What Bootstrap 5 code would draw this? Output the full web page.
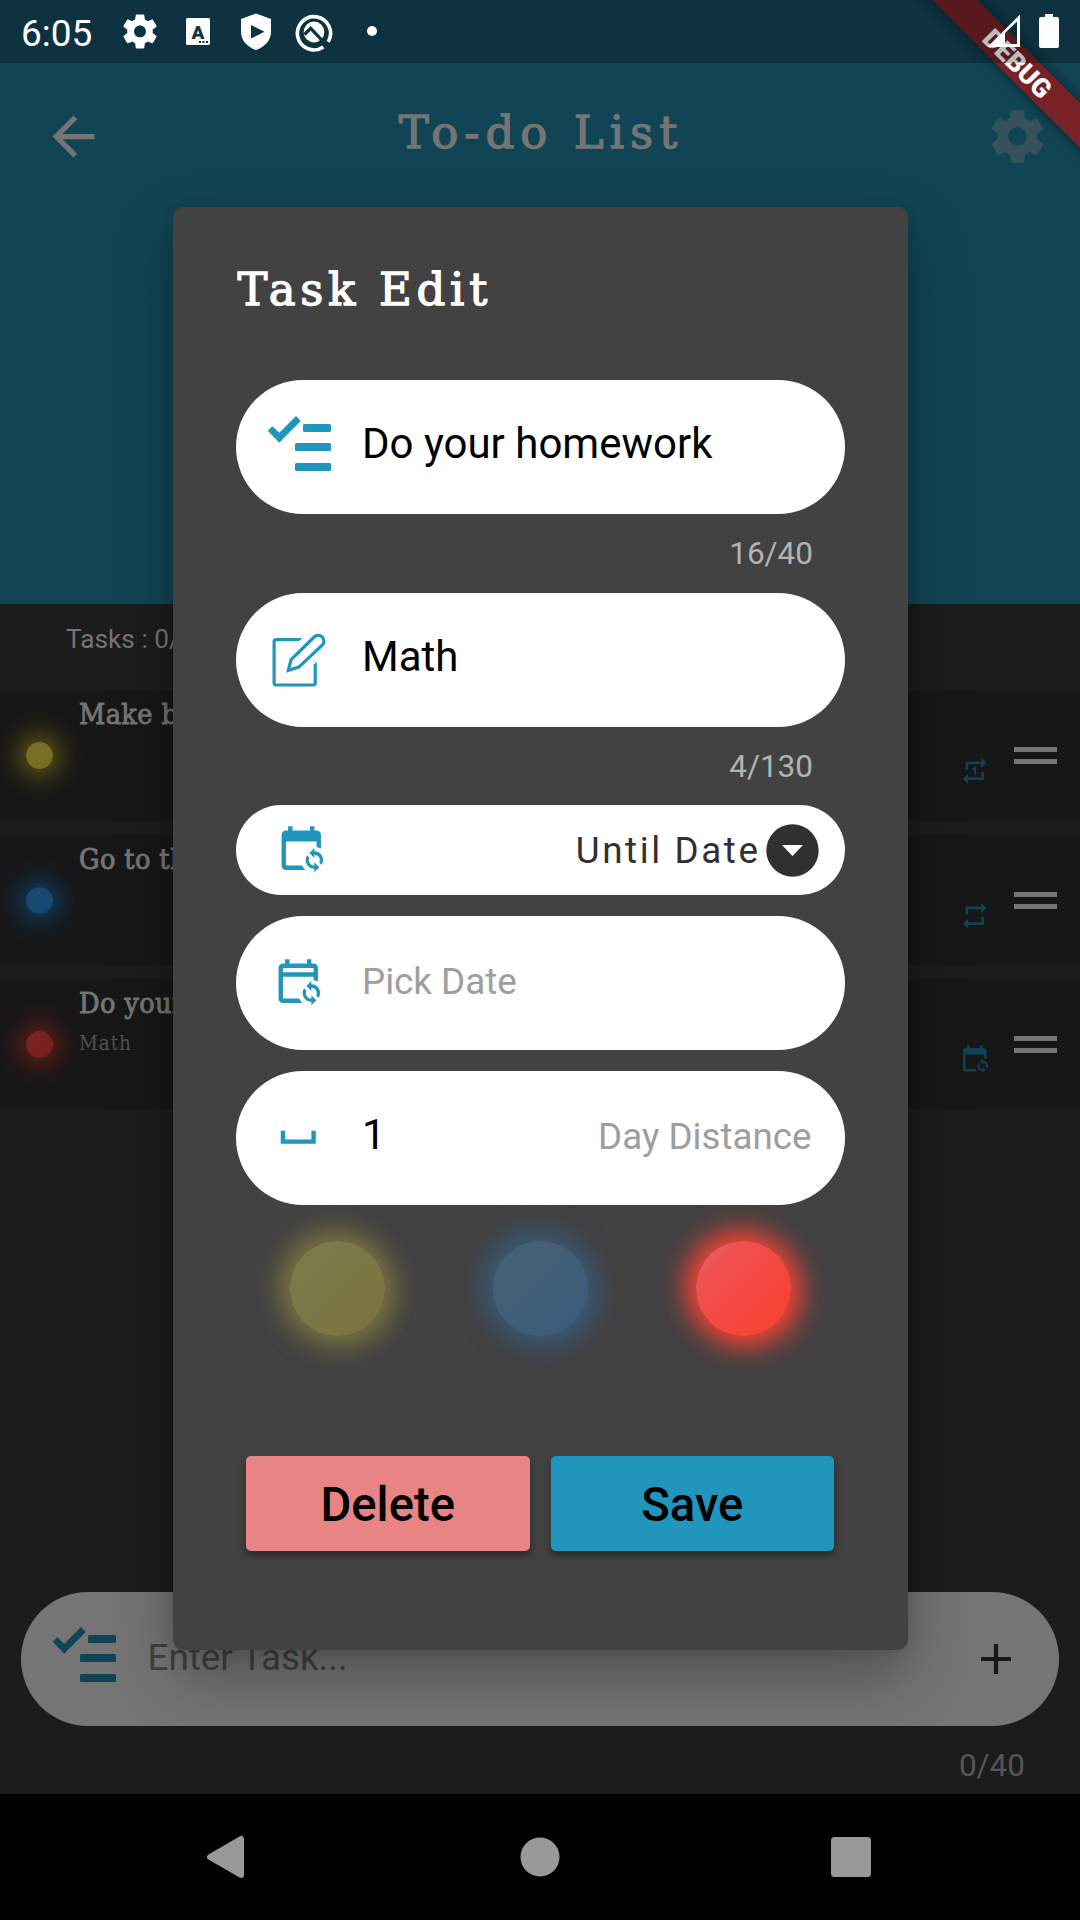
<!DOCTYPE html>
<html lang="en">
<head>
<meta charset="utf-8">
<meta name="viewport" content="width=device-width, initial-scale=1">
<title>To-do List</title>
<link href="https://cdn.jsdelivr.net/npm/bootstrap@5.3.0/dist/css/bootstrap.min.css" rel="stylesheet">
<style>
  :root { --accent: #2196bc; --accent-dim: #104454; --dim: #757575; }
  html, body { height: 1920px; }
  body { width: 1080px; background: #1c1c1c; font-family: Roboto, sans-serif; overflow: hidden; line-height: 1.2; }
  svg { display: block; flex: none; }
  .status { height: 63px; z-index: 30; background: rgba(0,0,0,.26); color: #fff; }
  .status .clock { font-size: 37px; width: 103px; padding: 5px 0 0 21px; }
  .hero { height: 603.5px; background: #114555; padding-top: 63px; }
  .topbar { height: 147px; padding: 0 31px 0 42px; }
  .typed { font-family: "DejaVu Serif", serif; font-size: 45px; line-height: 1; -webkit-text-stroke: 1.3px currentColor; }
  .topbar .typed { color: var(--dim); padding: 0 0 8px 0; letter-spacing: 6px; margin-right: 9px; }
  .summary { height: 86.5px; color: var(--dim); font-size: 26.25px; padding: 20px 0 0 66px; }
  .task { height: 131px; background: #171717; margin-bottom: 14px; padding-right: 23px; }
  .task.second { margin-bottom: 13px; }
  .led { width: 27px; height: 27px; margin: 0 26px 0 26px; }
  .led.y { background: linear-gradient(135deg, #77702c, #776d1c); box-shadow: 0 0 26px 6px #6f6612; }
  .led.b { background: linear-gradient(135deg, #20496c, #10477a); box-shadow: 0 0 26px 6px #0f4677; }
  .led.r { background: linear-gradient(135deg, #772627, #781f19); box-shadow: 0 0 26px 6px #741e18; }
  .ttl { font-family: "DejaVu Serif Condensed", "DejaVu Serif", serif; font-stretch: condensed; font-size: 28.5px; line-height: 49px; color: var(--dim); -webkit-text-stroke: .9px currentColor; letter-spacing: .4px; }
  .sub { font-family: "DejaVu Serif Condensed", "DejaVu Serif", serif; font-stretch: condensed; font-size: 20.5px; line-height: 30px; color: #525252; letter-spacing: .9px; }
  .handle { width: 43px; height: 17px; border: solid var(--dim); border-width: 5.7px 0; margin-left: 24px; }
  .rep { color: var(--accent-dim); margin-top: 31px; }
  .composer { height: 134px; margin: 0 21px; background: var(--dim); padding-left: 30.5px; }
  .composer .hint { font-size: 36.75px; color: #424242; margin-left: 30px; padding-bottom: 1px; }
  .composer-count { font-size: 31.5px; color: #555; padding: 20px 55px 0 0; height: 68px; line-height: 40px; }
  .sysnav { height: 126px; background: #000; padding: 0 208px 0 206px; }
  .scrim { top: 63px; height: 1731px; z-index: 10; }
  .sheet { width: 735px; height: 1443.5px; background: #424242; border-radius: 10.5px; padding: 0 63px; box-shadow: 0 26px 62px rgba(0,0,0,.32), 0 2px 14px rgba(0,0,0,.1); }
  .sheet .typed { height: 173.5px; color: #fff; padding: 60px 0 0 2px; letter-spacing: 4.7px; }
  .field { height: 133.8px; flex: none; background: #fff; color: var(--accent); padding: 0 33px 0 31.5px; }
  .field .val { font-size: 42px; color: #000; padding-bottom: 5px; }
  .field .ph { font-size: 36.75px; color: #9e9e9e; padding-bottom: 2px; }
  .ico { width: 95px; flex: none; }
  .count { height: 78.7px; flex: none; text-align: right; font-size: 31.5px; line-height: 80px; color: #b3b3b3; padding-right: 31.500px; }
  .dropdown-pill { height: 89.7px; margin-bottom: 21px; padding-right: 26px; }
  .dropdown-pill .val { font-size: 36.75px; letter-spacing: 2.6px; color: #303030; padding: 1px 0 0; margin-right: 5px; }
  .swatches { margin: 36.7px 54px 0 54.5px; }
  .swatch { width: 94.5px; height: 94.5px; }
  .swatch.y { background: linear-gradient(135deg, #7d7a4d, #7c7440); box-shadow: -5px -5px 30px 3px #7b7340, 5px 5px 30px 3px #7b7340; }
  .swatch.b { background: linear-gradient(135deg, #4a6175, #385c7b); box-shadow: -5px -5px 30px 3px #395a77, 5px 5px 30px 3px #395a77; }
  .swatch.r { background: linear-gradient(135deg, #ec6468, #f05050 25%, #f84235 85%); box-shadow: -5px -5px 30px 3px #f44336, 5px 5px 30px 3px #f44336; }
  .actions { margin-top: 120.5px; padding: 0 10.5px; gap: 21px; }
  .actions .btn { flex: 1; height: 94.5px; border: 0; border-radius: 5px; font-size: 47.25px; font-weight: 500; color: #000; line-height: 1; padding: 4px 0 0; box-shadow: 0 5px 6px rgba(0,0,0,.25), 0 3px 10px rgba(0,0,0,.15); }
  .del { background: #e88484; } .sav { background: #2196bc; }
  .ribbon { top: 0; right: 0; z-index: 20; }
</style>
</head>
<body class="position-relative">

<!-- System status bar -->
<div class="status position-absolute top-0 start-0 w-100 d-flex align-items-center">
  <span class="clock">6:05</span>
  <svg width="290" height="63" viewBox="103 0 290 63" fill="#fff">
    <path transform="translate(119.6 11) scale(1.7)" d="M19.43 12.98c.04-.32.07-.64.07-.98s-.03-.66-.07-.98l2.11-1.65c.19-.15.24-.42.12-.64l-2-3.46c-.12-.22-.39-.3-.61-.22l-2.49 1c-.52-.4-1.08-.73-1.69-.98l-.38-2.65C14.46 2.18 14.25 2 14 2h-4c-.25 0-.46.18-.49.42l-.38 2.65c-.61.25-1.17.59-1.69.98l-2.49-1c-.23-.09-.49 0-.61.22l-2 3.46c-.13.22-.07.49.12.64l2.11 1.65c-.04.32-.07.65-.07.98s.03.66.07.98l-2.11 1.65c-.19.15-.24.42-.12.64l2 3.46c.12.22.39.3.61.22l2.49-1c.52.4 1.08.73 1.69.98l.38 2.65c.03.24.24.42.49.42h4c.25 0 .46-.18.49-.42l.38-2.65c.61-.25 1.17-.59 1.69-.98l2.49 1c.23.09.49 0 .61-.22l2-3.46c.12-.22.07-.49-.12-.64l-2.11-1.65zM12 15.500c-1.930 0-3.500-1.570-3.500-3.500s1.570-3.500 3.500-3.500 3.500 1.570 3.500 3.500-1.570 3.500-3.500 3.500z"/>
    <rect x="186" y="18" width="24" height="27" rx="1.500"/>
    <text x="198" y="38.500" text-anchor="middle" font-family="Roboto" font-weight="900" font-size="19" fill="#0d3440">A</text>
    <path fill="#0d3440" d="M199 41h2v2h-2zM202.500 41h2v2h-2zM206 41h2v2h-2z"/>
    <path fill-rule="evenodd" d="M256 13.500 271 19v13c0 8-6 15-15 18-9-3-15-10-15-18V19zM251 25v13.500l13.500-6.700z"/>
    <!-- Ring open at the lower right, disc with a bent line running out to the handle -->
    <g fill="none">
      <path stroke="#fff" stroke-width="3.600" d="M323.300 47A16.600 16.600 0 1 1 328.200 41.800"/>
      <circle cx="314" cy="32" r="10.400" fill="#fff"/>
      <path stroke="#0d3440" stroke-width="3.200" d="M304.500 34.500l6.200-6.200L326 44.500"/>
    </g>
    <circle cx="372" cy="31" r="5"/>
  </svg>
  <svg class="ms-auto" width="100" height="63" viewBox="980 0 100 63" fill="#fff">
    <path fill-rule="evenodd" d="M987.500 47 1020 14.500V47zM1005 33v11h12V21.500z"/>
    <path d="M1045 14h8v3h4a2 2 0 0 1 2 2v27a2 2 0 0 1-2 2h-16a2 2 0 0 1-2-2V19a2 2 0 0 1 2-2h4z"/>
  </svg>
</div>

<!-- To-do screen -->
<main class="d-flex flex-column h-100">
  <header class="hero">
    <div class="topbar d-flex align-items-center justify-content-between">
      <svg width="63" height="63" viewBox="0 0 24 24" fill="#757575"><path d="M20 11H7.830l5.590-5.590L12 4l-8 8 8 8 1.410-1.410L7.830 13H20v-2z"/></svg>
      <span class="typed">To-do List</span>
      <svg width="63" height="63" viewBox="0 0 24 24" fill="#36535d"><path d="M19.430 12.980c.04-.32.07-.64.07-.98s-.03-.66-.07-.98l2.110-1.650c.19-.15.24-.42.12-.64l-2-3.460c-.12-.22-.39-.3-.61-.22l-2.490 1c-.52-.4-1.080-.73-1.690-.98l-.38-2.650C14.460 2.180 14.250 2 14 2h-4c-.25 0-.46.18-.49.42l-.38 2.650c-.61.25-1.170.59-1.690.98l-2.490-1c-.23-.09-.49 0-.61.22l-2 3.460c-.13.22-.07.49.12.64l2.110 1.650c-.04.32-.07.65-.07.98s.03.66.07.98l-2.110 1.650c-.19.15-.24.42-.12.64l2 3.460c.12.22.39.3.61.22l2.490-1c.52.4 1.080.73 1.690.98l.38 2.650c.03.24.24.42.49.42h4c.25 0 .46-.18.49-.42l.38-2.650c.61-.25 1.170-.59 1.690-.98l2.490 1c.23.09.49 0 .61-.22l2-3.460c.12-.22.07-.49-.12-.64l-2.110-1.650zM12 15.500c-1.930 0-3.500-1.570-3.500-3.500s1.570-3.500 3.500-3.500 3.500 1.570 3.500 3.500-1.570 3.500-3.500 3.500z"/></svg>
    </div>
  </header>
  <div class="summary">Tasks : 0/3</div>

  <div class="task d-flex align-items-center">
    <span class="led y rounded-circle"></span>
    <div class="align-self-start flex-grow-1"><div class="ttl">Make b</div></div>
    <svg class="rep" width="31.500" height="31.500" viewBox="0 0 24 24" fill="currentColor"><path d="M17 17H7v-3l-4 4 4 4v-3h12v-6h-2zM7 7h10v3l4-4-4-4v3H5v6h2zM13 15V9h-1l-2 1v1h1.500v4z"/></svg>
    <span class="handle"></span>
  </div>
  <div class="task second d-flex align-items-center">
    <span class="led b rounded-circle"></span>
    <div class="align-self-start flex-grow-1"><div class="ttl">Go to th</div></div>
    <svg class="rep" width="31.500" height="31.500" viewBox="0 0 24 24" fill="currentColor"><path d="M17 17H7v-3l-4 4 4 4v-3h12v-6h-2zM7 7h10v3l4-4-4-4v3H5v6h2z"/></svg>
    <span class="handle"></span>
  </div>
  <div class="task d-flex align-items-center mb-auto">
    <span class="led r rounded-circle"></span>
    <div class="align-self-start flex-grow-1"><div class="ttl">Do your</div><div class="sub">Math</div></div>
    <svg class="rep" width="31.500" height="31.500" viewBox="0 0 24 24" fill="currentColor"><path d="M19 3h-1V1h-2v2H8V1H6v2H5a2 2 0 0 0-2 2v14a2 2 0 0 0 2 2h8.800L12.300 19H5V8h14v2.500l2 .7V5a2 2 0 0 0-2-2z"/><path d="M18 11v1.500c3.190 0 5.090 3.550 3.330 6.210l-1.090-1.090C21.060 15.960 19.850 14 18 14v1.500l-2.250-2.250zM18 22v-1.500c-3.190 0-5.090-3.550-3.330-6.210l1.090 1.090C14.940 17.040 16.150 19 18 19v-1.500l2.250 2.250z"/></svg>
    <span class="handle"></span>
  </div>

  <div class="composer rounded-pill d-flex align-items-center">
    <svg width="66" height="56" viewBox="0 0 66 56" fill="#104454" style="margin-top:-8px"><path d="M.7 14.700 5.300 10.300l7 6.400L29 0l4.700 5L12.300 26.700z"/><rect x="36" y="8" width="28" height="8" rx="1.500"/><rect x="28" y="27" width="36" height="8" rx="1.500"/><rect x="28" y="47" width="36" height="8" rx="1.500"/></svg>
    <span class="hint">Enter Task...</span>
    <svg class="ms-auto" width="32" height="32" viewBox="0 0 32 32" style="margin-right:47px"><path d="M1 16h30M16 1v30" stroke="#171717" stroke-width="4.200"/></svg>
  </div>
  <div class="composer-count text-end">0/40</div>

  <nav class="sysnav d-flex align-items-center justify-content-between">
    <svg width="42" height="46" viewBox="0 0 42 46"><path d="M35 5v36L4 23z" fill="#999" stroke="#999" stroke-width="6" stroke-linejoin="round"/></svg>
    <svg width="40" height="40"><circle cx="20" cy="20" r="19.500" fill="#999"/></svg>
    <svg width="41" height="40"><rect width="40" height="40" rx="3.500" fill="#999"/></svg>
  </nav>
</main>

<!-- Task edit dialog -->
<div class="scrim position-absolute start-0 w-100 d-flex align-items-center justify-content-center">
  <div class="sheet d-flex flex-column">
    <div class="typed">Task Edit</div>

    <div class="field rounded-pill d-flex align-items-center">
      <span class="ico"><svg width="66" height="56" viewBox="0 0 66 56" fill="currentColor" style="margin-top:-7px"><path d="M.7 14.700 5.300 10.300l7 6.400L29 0l4.700 5L12.300 26.700z"/><rect x="36" y="8" width="28" height="8" rx="1.500"/><rect x="28" y="27" width="36" height="8" rx="1.500"/><rect x="28" y="47" width="36" height="8" rx="1.500"/></svg></span>
      <span class="val">Do your homework</span>
    </div>
    <div class="count">16/40</div>

    <div class="field rounded-pill d-flex align-items-center">
      <span class="ico ps-1"><svg width="56" height="54" viewBox="-1.500 -.5 56 54" fill="none" stroke="currentColor" stroke-width="3.200"><path d="M29.500 6.200H3.600a2 2 0 0 0-2 2v41.300a2 2 0 0 0 2 2h37.100a2 2 0 0 0 2-2V27"/><path d="M15.800 36.800 18.600 26 41.700 3.500a5.700 5.700 0 0 1 8 8.200L26.300 33.600z"/><path d="M27 8.500 33 3M41 30l5-5" stroke="#fff" stroke-width="2"/></svg></span>
      <span class="val">Math</span>
    </div>
    <div class="count">4/130</div>

    <div class="field dropdown-pill rounded-pill d-flex align-items-center">
      <span class="ico ps-2"><svg width="52.500" height="52.500" viewBox="0 0 24 24" fill="currentColor"><path d="M19 3h-1V1h-2v2H8V1H6v2H5a2 2 0 0 0-2 2v14a2 2 0 0 0 2 2h8.800L12.300 19H5V8h14v2.500l2 .7V5a2 2 0 0 0-2-2z"/><path d="M18 11v1.500c3.190 0 5.090 3.550 3.330 6.210l-1.090-1.090C21.060 15.960 19.850 14 18 14v1.500l-2.250-2.250zM18 22v-1.500c-3.190 0-5.090-3.550-3.330-6.210l1.090 1.090C14.940 17.040 16.150 19 18 19v-1.500l2.250 2.250z"/></svg></span>
      <span class="val ms-auto">Until Date</span>
      <svg width="53" height="53"><circle cx="26.500" cy="26.500" r="26.200" fill="#303030"/><path d="M16 21h21L26.500 32z" fill="#fff"/></svg>
    </div>

    <div class="field rounded-pill d-flex align-items-center">
      <span class="ico" style="padding-left:5px"><svg width="52.500" height="52.500" viewBox="0 0 24 24" fill="currentColor"><path fill-rule="evenodd" d="M19 3h-1V1h-2v2H8V1H6v2H5a2 2 0 0 0-2 2v14a2 2 0 0 0 2 2h8.800L12.300 19H5V9h14v1.500l2 .7V5a2 2 0 0 0-2-2zM5 5h14v2H5z"/><path d="M18 11v1.500c3.190 0 5.090 3.550 3.330 6.210l-1.090-1.090C21.060 15.960 19.850 14 18 14v1.500l-2.250-2.250zM18 22v-1.500c-3.190 0-5.090-3.550-3.330-6.210l1.090 1.090C14.940 17.040 16.150 19 18 19v-1.500l2.250 2.250z"/></svg></span>
      <span class="ph">Pick Date</span>
    </div>

    <div class="field rounded-pill d-flex align-items-center" style="margin-top:21px">
      <span class="ico" style="padding-left:5px"><svg width="52.500" height="52.500" viewBox="0 0 24 24" fill="currentColor"><path d="M18 9v4H6V9H4v6h16V9z"/></svg></span>
      <span class="val">1</span>
      <span class="ph ms-auto">Day Distance</span>
    </div>

    <div class="swatches d-flex justify-content-between">
      <span class="swatch y rounded-circle"></span>
      <span class="swatch b rounded-circle"></span>
      <span class="swatch r rounded-circle"></span>
    </div>

    <div class="actions d-flex">
      <button class="btn del">Delete</button>
      <button class="btn sav">Save</button>
    </div>
  </div>
</div>

<!-- Corner ribbon -->
<svg class="ribbon position-absolute" width="190" height="190" viewBox="890 0 190 190">
  <defs><filter id="soft" x="-20%" y="-20%" width="140%" height="140%"><feGaussianBlur stdDeviation="7"/></filter></defs>
  <path d="M892-40 1120 188v-45L937-40z" fill="#000" opacity=".5" filter="url(#soft)"/>
  <path d="M892-40 1120 188v-45L937-40z" fill="#782227"/>
  <text transform="translate(1017.500 63.500) rotate(45)" text-anchor="middle" y="9.500" font-family="Roboto" font-weight="900" font-size="26.500" fill="#fff">DEBUG</text>
</svg>

<script src="https://cdn.jsdelivr.net/npm/bootstrap@5.3.0/dist/js/bootstrap.bundle.min.js"></script>
</body>
</html>
